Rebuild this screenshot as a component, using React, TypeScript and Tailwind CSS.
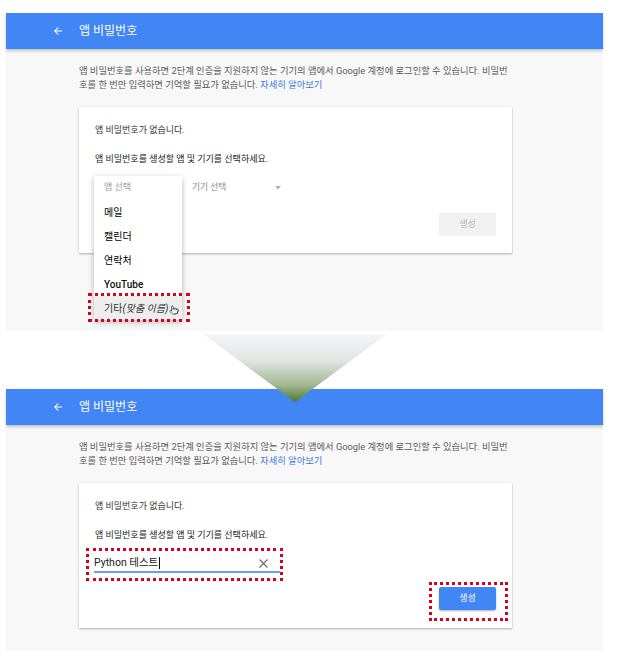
import React from "react";
import { Pointer } from "lucide-react";

function Header() {
  return (
    <div className="relative h-[36px] bg-[#4285f4] flex items-center pl-[46px] shadow-[0_2px_3px_rgba(0,0,0,0.22)]">
      <svg width="12" height="12" viewBox="0 0 24 24" fill="#ffffff">
        <path d="M20 11H7.83l5.59-5.59L12 4l-8 8 8 8 1.41-1.41L7.83 13H20v-2z" />
      </svg>
      <span className="ml-[15px] text-[12px] leading-none text-white">앱 비밀번호</span>
    </div>
  );
}

function Description() {
  return (
    <div className="pl-[73px] pt-[15px] text-[9.3px] leading-[14px] text-[#5a5a5a]">
      <div className="whitespace-nowrap">
        앱 비밀번호를 사용하면 2단계 인증을 지원하지 않는 기기의 앱에서 Google 계정에 로그인할 수 있습니다. 비밀번
      </div>
      <div className="whitespace-nowrap">
        호를 한 번만 입력하면 기억할 필요가 없습니다. <span className="text-[#3b78e7]">자세히 알아보기</span>
      </div>
    </div>
  );
}

function CardTexts() {
  return (
    <>
      <div className="text-[9px] leading-[14px] text-[#333333]">앱 비밀번호가 없습니다.</div>
      <div className="mt-[15px] text-[9px] leading-[14px] text-[#222222]">
        앱 비밀번호를 생성할 앱 및 기기를 선택하세요.
      </div>
    </>
  );
}

function Dotted({ className }: { className: string }) {
  return (
    <div
      className={
        "absolute border-[3px] border-dotted border-[#d6001c] pointer-events-none z-20 " + className
      }
    />
  );
}

export default function App() {
  return (
    <div className="relative w-[619px] h-[666px] bg-white pt-[13px] pl-[6px] font-[Roboto,'Noto_Sans_CJK_KR',sans-serif]">
      {/* Panel 1 */}
      <div className="w-[597px] h-[318px] bg-[#f8f8f8]">
        <Header />
        <Description />
        <div className="relative ml-[73px] mt-[15px] w-[433px] h-[146px] bg-white shadow-[0_1px_2px_rgba(0,0,0,0.3)] px-[16px] pt-[16px]">
          <CardTexts />
          <div className="mt-[12px] h-[20px] flex items-center text-[8.7px]">
            <span className="w-[97px]" />
            <span className="w-[83px] text-[#8a8a8a]">기기 선택</span>
            <svg width="6" height="4" viewBox="0 0 6 4">
              <path d="M0 0h6L3 3.5z" fill="#b0b0b0" />
            </svg>
          </div>
          <div className="mt-[15px] flex justify-end">
            <div className="w-[57px] h-[23px] bg-[#f1f1f1] flex items-center justify-center text-[9px] text-[#b5b5b5]">
              생성
            </div>
          </div>

          {/* dropdown menu */}
          <div className="absolute left-[15px] top-[69px] w-[88px] bg-white shadow-[0_2px_6px_rgba(0,0,0,0.28)] z-10">
            <div className="h-[24px] flex items-center pl-[10px] text-[9px] text-[#9a9a9a]">앱 선택</div>
            <div className="h-[24px] flex items-center pl-[10px] text-[10px] text-black">메일</div>
            <div className="h-[24px] flex items-center pl-[10px] text-[10px] text-black">캘린더</div>
            <div className="h-[24px] flex items-center pl-[10px] text-[10px] text-black">연락처</div>
            <div className="h-[24px] flex items-center pl-[10px] text-[10px] font-medium text-[#111111]">YouTube</div>
            <div className="h-[24px] flex items-center pl-[10px] text-[10px] text-[#333333] bg-[#eeeeee]">
              <span>기타</span>
              <span className="italic">(맞춤 이름)</span>
              <Pointer size={10} strokeWidth={1.6} className="ml-[1px] mt-[4px] text-[#333333]" />
            </div>
          </div>
          <Dotted className="left-[9px] top-[186px] w-[102px] h-[29px]" />
        </div>
      </div>

      {/* Panel 2 */}
      <div className="mt-[58px] w-[597px] h-[262px] bg-[#f8f8f8]">
        <Header />
        <Description />
        <div className="relative ml-[73px] mt-[15px] w-[433px] h-[145px] bg-white shadow-[0_1px_2px_rgba(0,0,0,0.3)] px-[16px] pt-[16px]">
          <CardTexts />
          <div className="relative mt-[12px] -ml-[1px] w-[186px]">
            <div className="h-[17px] flex items-center text-[10.5px] text-[#222222]">
              <span>Python 테스트</span>
              <span className="ml-[1px] w-[1px] h-[12px] bg-[#111111]" />
            </div>
            <div className="h-[2px] bg-[#6a9ee8]" />
            <svg
              className="absolute right-[12px] top-[5px]"
              width="9"
              height="9"
              viewBox="0 0 9 9"
            >
              <path d="M0.5 0.5L8.5 8.5M8.5 0.5L0.5 8.5" stroke="#6b6b6b" strokeWidth="1.1" />
            </svg>
          </div>
          <div className="mt-[14px] flex justify-end">
            <div className="w-[57px] h-[23px] bg-[#4285f4] rounded-[2px] shadow-[0_1px_2px_rgba(0,0,0,0.3)] flex items-center justify-center text-[9px] text-white">
              생성
            </div>
          </div>
          <Dotted className="left-[7px] top-[65px] w-[197px] h-[33px]" />
          <Dotted className="left-[350px] top-[99px] w-[79px] h-[39px]" />
        </div>
      </div>

      {/* transition arrow */}
      <svg
        className="absolute left-[203px] top-[334px] z-30"
        width="184"
        height="68"
        viewBox="0 0 184 68"
      >
        <defs>
          <linearGradient id="tri" x1="0" y1="0" x2="0" y2="1">
            <stop offset="0" stopColor="#f4f6f9" />
            <stop offset="0.4" stopColor="#dfe4e1" />
            <stop offset="0.75" stopColor="#a2b793" />
            <stop offset="1" stopColor="#4a7a26" />
          </linearGradient>
        </defs>
        <polygon points="0,0 184,0 92,68" fill="url(#tri)" />
      </svg>
    </div>
  );
}
